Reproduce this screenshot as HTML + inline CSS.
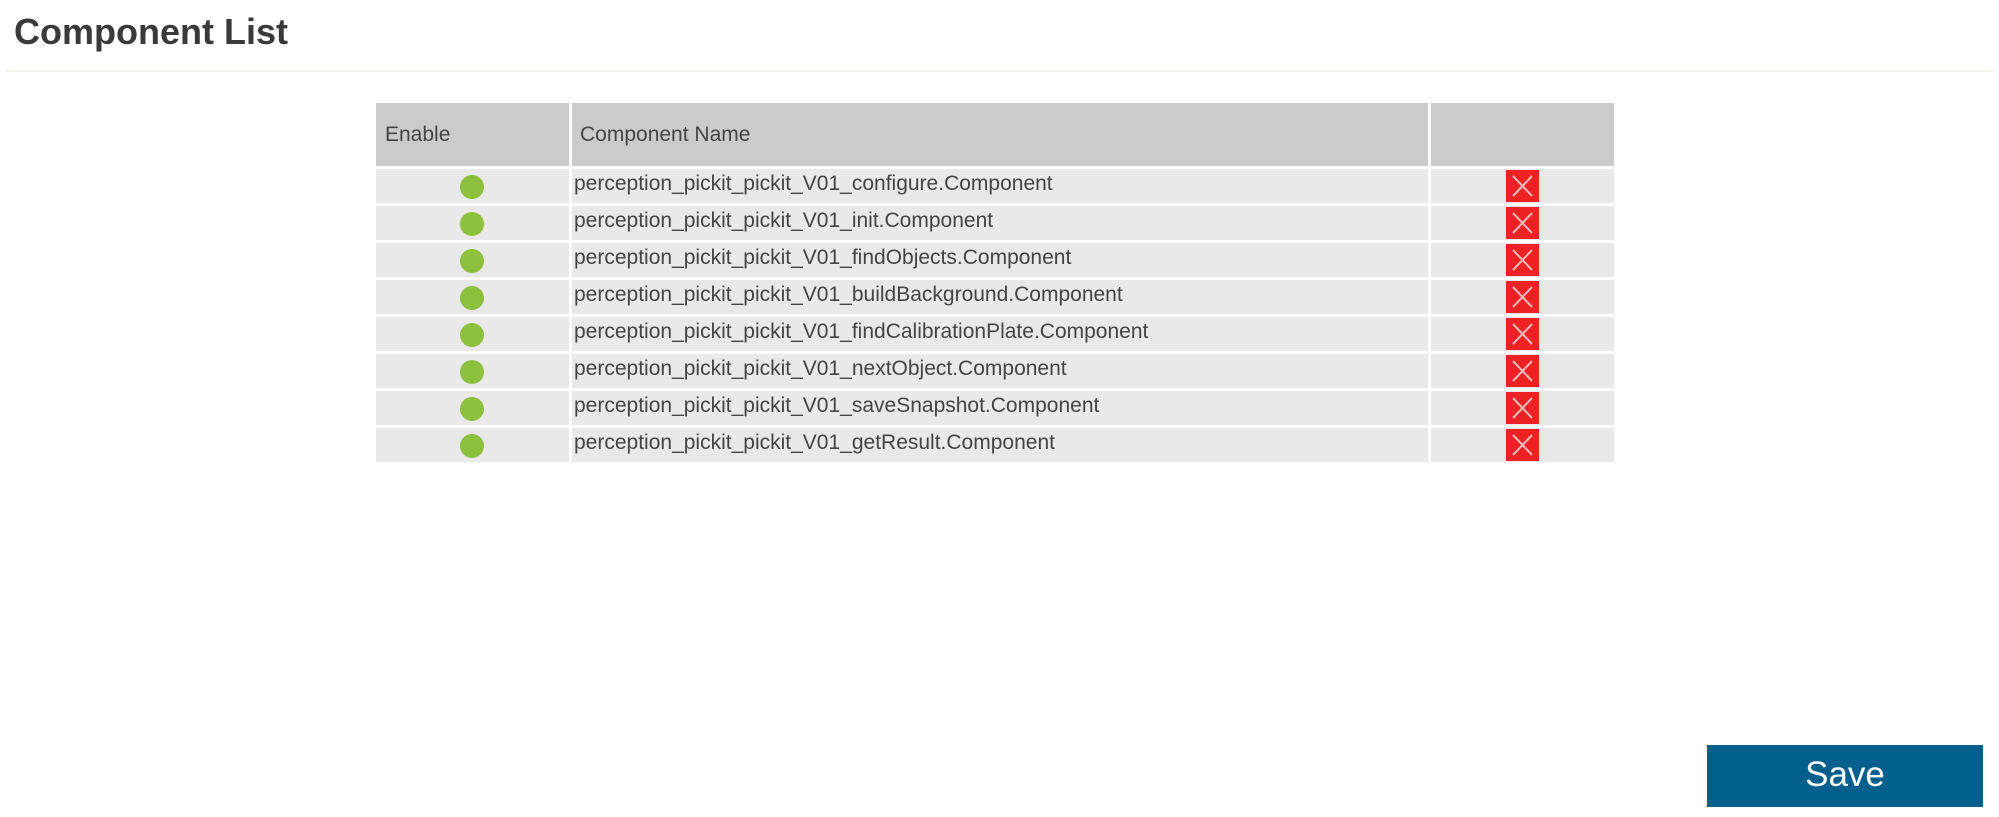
<!DOCTYPE html>
<html><head><meta charset="utf-8"><style>
body{margin:0;width:1999px;height:817px;background:#fff;position:relative;overflow:hidden;font-family:"Liberation Sans",sans-serif;color:#444}
.a{position:absolute}
h1{position:absolute;left:14px;top:11px;margin:0;font-size:36px;font-weight:bold;color:#3a3a3a}
.sep{left:6px;right:6px;top:70px;height:2px;background:#f3f3ea}
.hd{background:#cbcbcb;top:103px;height:63px;font-size:21px;line-height:63px}
.c{background:#e9e9e9;height:34px}
.t{font-size:21px;line-height:30px;white-space:nowrap}
.dot{width:24px;height:24px;border-radius:50%;background:#8dc03c}
.x{width:33px;height:32px;background:#ee2222}
.btn{left:1707px;top:745px;width:276px;height:62px;background:#005f8c;color:#fff;font-size:35px;text-align:center;line-height:60px}
</style></head><body>
<h1>Component List</h1>
<div class="a sep"></div>
<div class="a hd" style="left:376px;width:193px;padding-left:9px;box-sizing:border-box">Enable</div>
<div class="a hd" style="left:572px;width:856px;padding-left:8px;box-sizing:border-box">Component Name</div>
<div class="a hd" style="left:1431px;width:183px"></div>
<div id="rows"></div>
<div class="a btn">Save</div>
<script>
var n=["configure","init","findObjects","buildBackground","findCalibrationPlate","nextObject","saveSnapshot","getResult"];
var h="";
n.forEach(function(s,i){var t=169+i*37;
h+='<div class="a c" style="left:376px;top:'+t+'px;width:193px"></div>';
h+='<div class="a c t" style="left:572px;top:'+t+'px;width:856px;padding-left:2px;box-sizing:border-box">perception_pickit_pickit_V01_'+s+'.Component</div>';
h+='<div class="a c" style="left:1431px;top:'+t+'px;width:183px"></div>';
h+='<div class="a dot" style="left:460px;top:'+(t+6)+'px"></div>';
h+='<div class="a x" style="left:1506px;top:'+(t+1)+'px"><svg width="33" height="32"><path d="M7 6L26 26M26 6L7 26" stroke="#f6b8b8" stroke-width="2"/></svg></div>';
});
document.getElementById("rows").innerHTML=h;
</script>
</body></html>
